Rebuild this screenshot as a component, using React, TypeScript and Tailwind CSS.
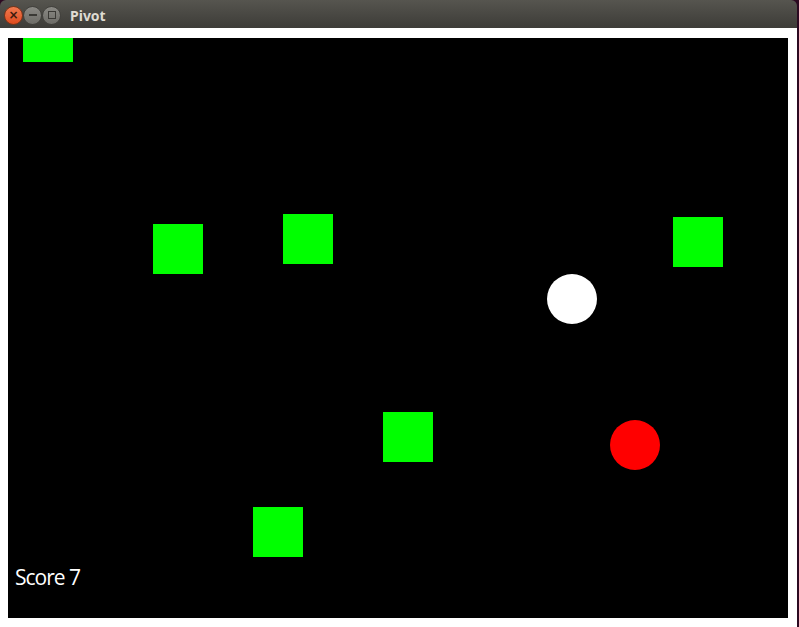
import React from 'react'

type Shape = { x: number; y: number }

const squares: Shape[] = [
	{ x: 15, y: -26 },
	{ x: 145, y: 186 },
	{ x: 275, y: 176 },
	{ x: 665, y: 179 },
	{ x: 375, y: 374 },
	{ x: 245, y: 469 },
]

const player: Shape = { x: 539, y: 236 }
const enemy: Shape = { x: 602, y: 382 }

function TitleBar() {
	return (
		<div className="h-[28px] flex items-center pl-[4px] pt-[2px] rounded-t-[6px] bg-gradient-to-b from-[#56554f] to-[#3d3c38]">
			<div className="w-[19px] h-[19px] rounded-full bg-gradient-to-b from-[#f07a4e] to-[#df4a1c] border border-[#7a3418] flex items-center justify-center text-[#3a1a0e] text-[12px] leading-none font-bold font-['DejaVu_Sans',sans-serif]">
				×
			</div>
			<div className="w-[19px] h-[19px] rounded-full bg-gradient-to-b from-[#8a8984] to-[#6d6c67] border border-[#42413d] flex items-center justify-center">
				<div className="w-[8px] h-[2px] bg-[#3a3935]" />
			</div>
			<div className="w-[19px] h-[19px] rounded-full bg-gradient-to-b from-[#8a8984] to-[#6d6c67] border border-[#42413d] flex items-center justify-center">
				<div className="w-[8px] h-[8px] border border-[#3a3935]" />
			</div>
			<span className="ml-[9px] text-[14px] font-bold text-[#dfdbd2] font-['Noto_Sans',sans-serif]">Pivot</span>
		</div>
	)
}

export default function App() {
	return (
		<div className="w-[799px] h-[627px] bg-[#2c0a22] flex overflow-hidden">
			<div className="w-[797px] h-full flex flex-col">
				<TitleBar />
				<div className="flex-1 bg-white pt-[10px] pl-[8px]">
					<div className="relative w-[780px] h-[580px] bg-black overflow-hidden">
						{squares.map((s, i) => (
							<div
								key={i}
								className="absolute w-[50px] h-[50px] bg-[#00ff00]"
								style={{ left: s.x, top: s.y }}
							/>
						))}
						<div
							className="absolute w-[50px] h-[50px] rounded-full bg-white"
							style={{ left: player.x, top: player.y }}
						/>
						<div
							className="absolute w-[50px] h-[50px] rounded-full bg-[#ff0000]"
							style={{ left: enemy.x, top: enemy.y }}
						/>
						<div className="absolute left-[7px] bottom-[30px] text-white text-[21px] leading-none tracking-[-1px] font-['Open_Sans',sans-serif]">
							Score 7
						</div>
					</div>
				</div>
			</div>
		</div>
	)
}
